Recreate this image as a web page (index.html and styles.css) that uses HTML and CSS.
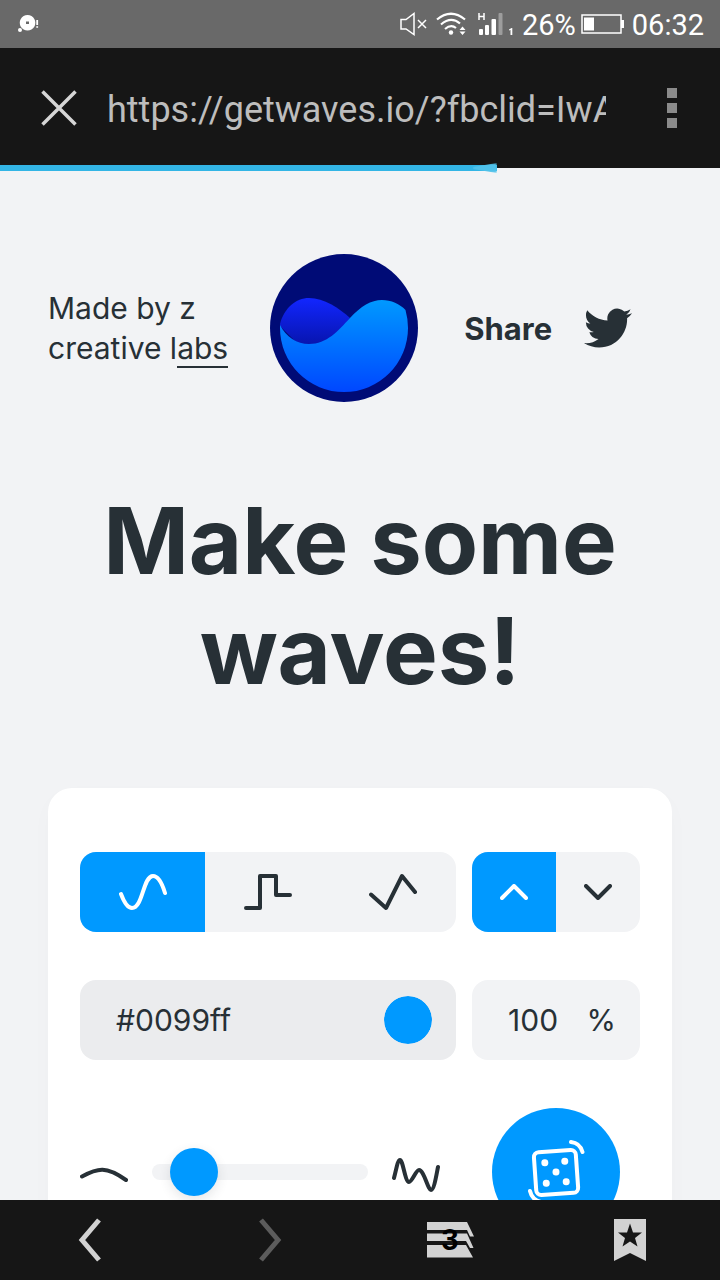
FILE: index.html
```html
<!DOCTYPE html>
<html lang="en">
<head>
<meta charset="utf-8">
<meta name="viewport" content="width=device-width, initial-scale=1">
<title>Get Waves</title>
<link rel="stylesheet" href="styles.css">
</head>
<body>
<div class="screen">
  <div class="status">
    <svg class="status-note" width="24" height="20" viewBox="0 0 24 20" fill="#fff"><path fill-rule="evenodd" d="M9.500 1a7.800 7.800 0 1 0 .1 0zM8 7.500h3v2.500H8z"/><circle cx="2" cy="16" r="2"/><path d="M18.300 6h1.800v5h-1.800zM18.300 12.300h1.800v1.500h-1.800z"/></svg>
    <div class="status-icons">
      <svg width="28" height="24" viewBox="0 0 28 24" fill="none" stroke="#fff" stroke-width="1.500"><path d="M1 7.500h5L14 1.500v21L6 17H1zM18 8l8 8M26 8l-8 8"/></svg>
      <svg class="wifi" width="30" height="24" viewBox="0 0 30 24" fill="none" stroke="#fff" stroke-width="2.200"><path d="M1 7.500Q15-4 29 7.500M5 12.500Q15 4 24 11.500M9 17Q15 12 20 16"/><circle cx="15" cy="20.500" r="2.200" fill="#fff" stroke="none"/><path d="M23.500 18l3-3.500 3 3.500zM23.500 19.500l3 3.500 3-3.500z" fill="#fff" stroke="none"/></svg>
      <svg class="signal" width="36" height="24" viewBox="0 0 36 24"><path d="M1 1v7M6 1v7M1 4.500h5" stroke="#fff" stroke-width="1.500"/><g fill="#fff"><rect x="1" y="17" width="4" height="6" rx="1"/><rect x="7" y="13" width="4" height="10" rx="1"/><rect x="13.500" y="7" width="4.500" height="16" rx="1"/><rect x="20.500" y="1" width="4" height="22" rx="1" opacity=".35"/><path d="M31 17.500l2.500-1.500h.8v7h-1.800v-5l-1.500.6z"/></g></svg>
      <span class="status-text">26%</span>
      <svg class="battery" width="43" height="20" viewBox="0 0 43 20"><rect x="1" y="1" width="39" height="18" fill="none" stroke="#fff" stroke-width="1.500"/><path d="M3 3.500h10v13H3zM40 6h3v8h-3z" fill="#fff"/></svg>
      <span class="status-text">06:32</span>
    </div>
  </div>

  <div class="toolbar">
    <button class="plain" aria-label="Stop loading"><svg width="38" height="38" viewBox="0 0 38 38" stroke="#d6d6d6" stroke-width="3.500"><path d="M2.500 2.500l33 33M35.500 2.500l-33 33"/></svg></button>
    <input class="url" type="text" aria-label="Address" value="https://getwaves.io/?fbclid=IwA">
    <button class="plain" aria-label="Menu"><svg width="12" height="42" viewBox="0 0 12 42" fill="#8b8b8b"><path d="M1 1h10v10H1zM1 16h10v10H1zM1 31h10v10H1z"/></svg></button>
    <div class="progress" style="width:69%"></div>
  </div>

  <main class="page">
    <header class="header">
      <p class="credit">Made by <a href="#z">z</a><br>creative l<a class="lined" href="#labs">abs</a></p>
      <svg class="logo" width="148" height="148" viewBox="0 0 148 148">
        <defs>
          <linearGradient id="front" x1="0" y1="0" x2="0" y2="1"><stop offset="0" stop-color="#09f"/><stop offset="1" stop-color="#0047ff"/></linearGradient>
          <linearGradient id="back" x1="0" y1="0" x2="0" y2="1"><stop offset="0" stop-color="#1226ff"/><stop offset="1" stop-color="#0714ac"/></linearGradient>
        </defs>
        <circle cx="74" cy="74" r="74" fill="#000b76"/>
        <path d="M10 70C14 54 26 44 39 44C54 44 69 54 80 64L68 92H30L10 72Z" fill="url(#back)"/>
        <path d="M10 71C16 83 27 90 39 90C57 90 68 77 80 64C91 52 101 46 112 46C121 46 130 50 135.500 56Q138 65 138 74A64 64 0 0 1 10 74Z" fill="url(#front)"/>
      </svg>
      <a class="share" href="#share">Share
        <svg width="48" height="40" viewBox="0 2 24 20" fill="#273036"><path d="M23.953 4.570a10 10 0 0 1-2.825.775 4.958 4.958 0 0 0 2.163-2.723c-.951.555-2.005.959-3.127 1.184a4.920 4.920 0 0 0-8.384 4.482C7.690 8.095 4.067 6.130 1.640 3.162a4.822 4.822 0 0 0-.666 2.475c0 1.710.870 3.213 2.188 4.096a4.904 4.904 0 0 1-2.228-.616v.060a4.923 4.923 0 0 0 3.946 4.827 4.996 4.996 0 0 1-2.212.085 4.936 4.936 0 0 0 4.604 3.417 9.867 9.867 0 0 1-6.102 2.105c-.390 0-.779-.023-1.170-.067a13.995 13.995 0 0 0 7.557 2.209c9.053 0 13.998-7.496 13.998-13.985 0-.210 0-.420-.015-.630a9.935 9.935 0 0 0 2.460-2.548z"/></svg>
      </a>
    </header>

    <h1 class="title">Make some waves!</h1>

    <section class="card">
      <div class="segment">
        <button class="on" aria-label="Smooth wave"><svg width="48" height="40" viewBox="0 0 48 40"><path d="M2 22C5 30 9 36 13 36C24 36 24 4 34 4C39 4 43 11 46 21"/></svg></button>
        <button aria-label="Step wave"><svg width="48" height="40" viewBox="0 0 48 40"><path d="M2 36H16V4H32V23H46"/></svg></button>
        <button aria-label="Peak wave"><svg width="48" height="40" viewBox="0 0 48 40"><path d="M2 22.500L17 36L33 4L46 20"/></svg></button>
      </div>
      <div class="segment">
        <button class="on" aria-label="Face up"><svg width="28" height="16" viewBox="0 0 28 16"><path d="M2 14L14 2L26 14"/></svg></button>
        <button aria-label="Face down"><svg width="28" height="16" viewBox="0 0 28 16"><path d="M2 2L14 14L26 2"/></svg></button>
      </div>
      <div class="field field-color">
        <input class="text" type="text" aria-label="Hex color" value="#0099ff">
        <input class="swatch" type="color" aria-label="Pick color" value="#0099ff">
      </div>
      <label class="field field-opacity"><input class="text" type="text" aria-label="Opacity percent" value="100"><span>%</span></label>
      <div class="complexity">
        <svg class="ink" width="48" height="40" viewBox="0 0 48 40"><path d="M2 24.500C18 16 26 14 46 28"/></svg>
        <input class="slider" type="range" aria-label="Complexity" min="0" max="100" value="11">
        <svg class="ink" width="48" height="40" viewBox="0 0 48 40"><path d="M2 26C5 14 6 8 8 8C11 8 13 30 17 30C20 30 24 18 27 18C32 18 36 38 39 38C42 38 44 25 46 15"/></svg>
      </div>
      <button class="dice" aria-label="Random wave"><svg width="58" height="64" viewBox="0 0 58 64" fill="none" stroke="#fff" stroke-width="4" stroke-linecap="round"><g transform="rotate(-4 29 32)"><rect x="8" y="11" width="42" height="43" rx="5"/><g fill="#fff" stroke="none"><circle cx="18.500" cy="22" r="3.500"/><circle cx="38.500" cy="22" r="3.500"/><circle cx="29" cy="32" r="3.500"/><circle cx="18.500" cy="42.500" r="3.500"/><circle cx="38.500" cy="42.500" r="3.500"/></g></g><path d="M44 2Q53 3 55.500 12M3 51Q5 60 14 62"/></svg></button>
    </section>
  </main>

  <nav class="nav">
    <button class="plain" aria-label="Back"><svg width="24" height="44" viewBox="0 0 24 44" fill="none" stroke="#d2d2d2" stroke-width="5"><path d="M21 2L4 22L21 42"/></svg></button>
    <button class="plain" aria-label="Forward"><svg width="24" height="44" viewBox="0 0 24 44" fill="none" stroke="#5c5c5c" stroke-width="5"><path d="M3 2L20 22L3 42"/></svg></button>
    <button class="plain tabs" aria-label="Tabs"><svg width="48" height="36" viewBox="0 0 48 36" fill="#d2d2d2"><path d="M1 0H41L48 14.500H44L41 8H1ZM1 11.500H41L47.500 26H44L40 19H1ZM1 23H40L47 35.500H1Z"/></svg><span>3</span></button>
    <button class="plain" aria-label="Bookmarks"><svg width="32" height="44" viewBox="0 0 32 44"><path d="M0 1H32V43L16 35L0 43Z" fill="#d2d2d2"/><path d="M16 5.500L19 14.500H28L21 20L23.500 28.500L16 23.500L8.500 28.500L11 20L4 14.500H13Z" fill="#161616"/></svg></button>
  </nav>
</div>
</body>
</html>
```
FILE: styles.css
```css
* { box-sizing: border-box; }

body {
  margin: 0;
  background: #f2f3f5;
  color: #273036;
  font-family: Inter, "Open Sans", sans-serif;
}

button, input { margin: 0; border: 0; font: inherit; color: inherit; }
svg { display: block; flex: none; }
a { color: inherit; text-decoration: none; }

.screen { display: flex; flex-direction: column; height: 100vh; }

.status {
  display: flex;
  flex: none;
  align-items: center;
  justify-content: space-between;
  height: 48px;
  padding: 0 16px;
  background: #696969;
  color: #fff;
  font-family: Roboto, sans-serif;
}
.status-note { margin-left: 2px; }
.status-icons { display: flex; align-items: center; gap: 8px; }
.signal { margin-left: 4px; }
.battery { margin-left: -3px; }
.status-text { font-size: 29px; line-height: 48px; padding-top: 2px; }

.toolbar {
  position: relative;
  display: flex;
  flex: none;
  align-items: center;
  height: 120px;
  padding: 0 42px 0 40px;
  background: #161616;
}
.plain { display: flex; padding: 0; background: none; }
.url {
  flex: 1;
  min-width: 0;
  margin: 0 60px 0 29px;
  padding: 4px 0 0;
  background: none;
  color: #bdbdbd;
  font-family: Roboto, sans-serif;
  font-size: 36px;
  line-height: 48px;
  outline: 0;
}
.progress {
  position: absolute;
  left: 0;
  bottom: -3px;
  height: 6px;
  background: #33b5e5;
}
.progress::after {
  content: "";
  position: absolute;
  right: 0;
  bottom: -2px;
  width: 24px;
  height: 10px;
  background: #4fc1ea;
  clip-path: polygon(0 40%, 100% 0, 100% 100%, 0 60%);
  filter: blur(1px);
}

.page { flex: 1; min-height: 0; overflow: hidden; padding: 86px 48px 0; }

.header { display: flex; align-items: center; gap: 42px; }
.credit { margin: 0; font-size: 30px; line-height: 40px; white-space: nowrap; }
.lined { border-bottom: 2px solid #273036; }
.share {
  display: flex;
  align-items: center;
  gap: 32px;
  margin-left: 4px;
  font-size: 31px;
  font-weight: 700;
}

.title {
  margin: 84px 0 82px;
  font-size: 92px;
  font-weight: 700;
  line-height: 110px;
  text-align: center;
}

.card {
  display: grid;
  grid-template-columns: 376fr 168fr;
  gap: 48px 16px;
  padding: 64px 32px;
  border-radius: 24px;
  background: #fff;
  box-shadow: 0 8px 24px rgba(39, 48, 54, .02);
}

.segment {
  display: flex;
  height: 80px;
  overflow: hidden;
  border-radius: 16px;
  background: #f2f3f5;
}
.segment button {
  display: flex;
  flex: 1;
  align-items: center;
  justify-content: center;
  padding: 0;
  background: none;
}
.segment .on { background: #09f; color: #fff; }
.segment svg, .ink {
  fill: none;
  stroke: currentColor;
  stroke-width: 4;
  stroke-linecap: round;
  stroke-linejoin: round;
}

.field {
  display: flex;
  align-items: center;
  min-width: 0;
  height: 80px;
  padding: 0 24px 0 36px;
  border-radius: 16px;
  background: #f2f3f5;
  font-size: 30px;
}
.field-color { background: #ebecee; }
.text { flex: 1; width: 0; min-width: 0; padding: 0; background: none; outline: 0; }
.swatch {
  width: 48px;
  height: 48px;
  padding: 0;
  border-radius: 50%;
  background: none;
  appearance: none;
  overflow: hidden;
}
.swatch::-webkit-color-swatch-wrapper { padding: 0; }
.swatch::-webkit-color-swatch { border: 0; border-radius: 50%; }

.complexity { display: flex; align-items: center; gap: 24px; padding-right: 16px; }
.slider {
  flex: 1;
  min-width: 0;
  height: 48px;
  background: none;
  appearance: none;
}
.slider::-webkit-slider-runnable-track { height: 16px; border-radius: 8px; background: #f2f3f5; }
.slider::-webkit-slider-thumb {
  width: 48px;
  height: 48px;
  margin-top: -16px;
  border-radius: 50%;
  background: #09f;
  box-shadow: 0 4px 12px rgba(39, 48, 54, .12);
  appearance: none;
}

.dice {
  display: flex;
  align-items: center;
  justify-content: center;
  justify-self: center;
  width: 128px;
  height: 128px;
  padding: 0;
  border-radius: 50%;
  background: #09f;
}

.nav {
  position: relative;
  display: grid;
  flex: none;
  grid-template-columns: repeat(4, 1fr);
  place-items: center;
  height: 80px;
  background: #161616;
}
.tabs { display: grid; place-items: center; color: #000; }
.tabs svg, .tabs span { grid-area: 1 / 1; }
.tabs span { font-size: 30px; line-height: 36px; font-weight: 700; font-family: Roboto, sans-serif; }
```
